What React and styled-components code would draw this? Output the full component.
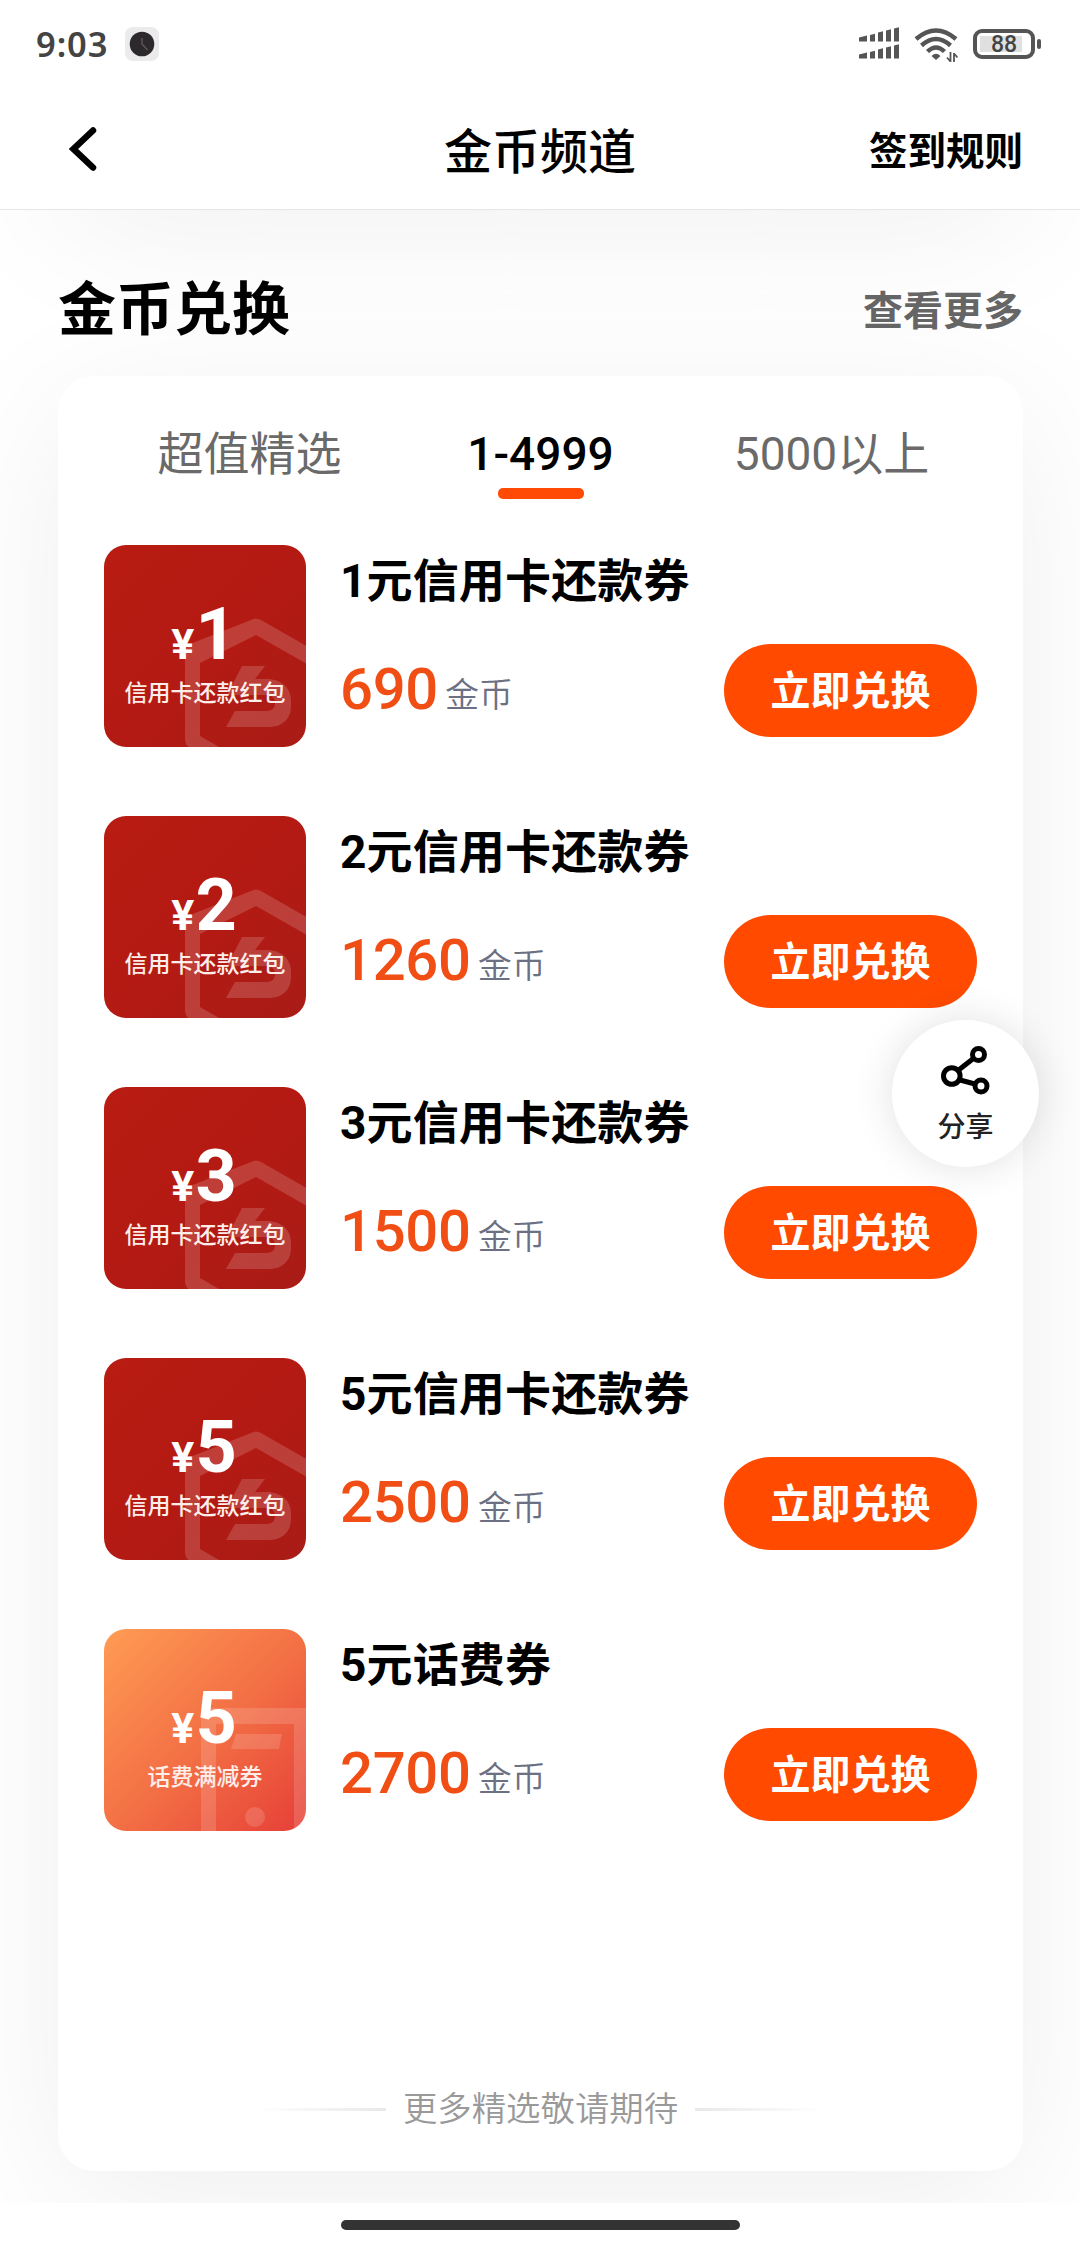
import React from "react";
import styled, { createGlobalStyle } from "styled-components";

const GlobalStyle = createGlobalStyle`
  * {
    box-sizing: border-box;
  }

  body {
    margin: 0;
    background: #fff;
    font-family: Roboto, "Noto Sans CJK SC", sans-serif;
    color: #000;
  }
`;

const Page = styled.div`
  display: flex;
  flex-direction: column;
  width: 1080px;
  height: 2248px;
  overflow: hidden;
  background: #fff;
`;

const StatusBar = styled.div`
  display: flex;
  align-items: center;
  height: 88px;
  padding: 0 38px 0 36px;
`;

const Time = styled.span`
  width: 89px;
  font-family: "Noto Sans", sans-serif;
  font-size: 34.5px;
  font-weight: 600;
  line-height: 44px;
  letter-spacing: 0.9px;
  color: #444;
`;

const StatusIcons = styled.div`
  display: flex;
  align-items: center;
  gap: 14px;
  margin-left: auto;
`;

const NavBar = styled.header`
  display: grid;
  grid-template-columns: 1fr auto 1fr;
  align-items: center;
  height: 122px;
  padding: 6px 57px 0;
  border-bottom: 1px solid #e6e6e6;
`;

const BackButton = styled.button`
  display: flex;
  margin: -6px 0 0 12px;
  padding: 0;
  border: 0;
  background: none;
`;

const NavTitle = styled.h1`
  margin: 0;
  padding-top: 3px;
  font-size: 48px;
  font-weight: 500;
  line-height: 60px;
`;

const NavLink = styled.span`
  justify-self: end;
  font-size: 38.5px;
  font-weight: 700;
  line-height: 60px;
`;

const Content = styled.main`
  display: flex;
  flex-direction: column;
  height: 1993px;
  padding: 0 57px 0 58px;
  overflow: hidden;

  /* tail of the section scrolled away above */
  &::before {
    content: "";
    flex-shrink: 0;
    height: 200px;
    margin-top: -200px;
    box-shadow: 0 15px 150px rgba(0, 0, 0, 0.068);
  }
`;

const SectionHeader = styled.div`
  display: flex;
  align-items: center;
  justify-content: space-between;
  height: 166px;
  padding-top: 34px;
`;

const SectionTitle = styled.h2`
  margin: 0;
  font-size: 58px;
  font-weight: 700;
  line-height: 80px;
`;

const MoreLink = styled.span`
  padding-bottom: 4px;
  font-size: 40px;
  font-weight: 700;
  color: #666;
`;

const Card = styled.section`
  display: flex;
  flex-direction: column;
  height: 1795px;
  padding: 44px 46px 0;
  border-radius: 36px;
  background: #fff;
  box-shadow: 0 30px 150px rgba(0, 0, 0, 0.068);
`;

const Tabs = styled.nav`
  display: grid;
  grid-template-columns: repeat(3, 1fr);
  height: 125px;
`;

const Tab = styled.div`
  display: flex;
  flex-direction: column;
  align-items: center;
  font-size: 46px;
  font-weight: ${(props) => (props.$active ? 500 : 400)};
  line-height: 68px;
  color: ${(props) => (props.$active ? "#000" : "#6a6a6a")};

  &::after {
    content: "";
    display: ${(props) => (props.$active ? "block" : "none")};
    width: 86px;
    height: 11px;
    border-radius: 5px;
    background: #ff4a06;
  }
`;

const CouponList = styled.div`
  display: flex;
  flex-direction: column;
  gap: 69px;
`;

const CouponRow = styled.article`
  display: flex;
  height: 202px;
`;

const Thumb = styled.div`
  position: relative;
  display: flex;
  flex-direction: column;
  align-items: center;
  flex-shrink: 0;
  width: 202px;
  height: 202px;
  padding-top: 48px;
  overflow: hidden;
  border-radius: 22px;
  color: #fff;
  background: ${(props) =>
    props.$kind === "phone"
      ? "linear-gradient(135deg, #ff9c54 0%, #f26d44 55%, #e63f38 100%)"
      : "linear-gradient(135deg, #b81c12 0%, #b31a13 55%, #a91c17 100%)"};
`;

const Watermark = styled.svg`
  position: absolute;
  inset: 0;
`;

const Amount = styled.div`
  position: relative;
  display: flex;
  align-items: baseline;
  gap: 2px;
  padding-right: 3px;
  font-size: 72px;
  font-weight: 700;
  line-height: 84px;
  letter-spacing: -1px;
`;

const Yen = styled.span`
  font-size: 43px;
  line-height: 1;
`;

const ThumbLabel = styled.div`
  position: relative;
  margin-top: 2px;
  font-size: 23px;
  font-weight: 500;
  line-height: 30px;
  color: #fdeeea;
`;

const CouponBody = styled.div`
  flex: 1;
  padding: 0 0 0 34px;
`;

const CouponTitle = styled.h3`
  margin: 0;
  padding-top: 2px;
  font-size: 46px;
  font-weight: 700;
  line-height: 68px;
  letter-spacing: 0.15px;
`;

const CouponFooter = styled.div`
  display: flex;
  align-items: center;
  justify-content: space-between;
  margin-top: 29px;
`;

const Price = styled.div`
  display: flex;
  align-items: baseline;
  padding-bottom: 3px;
  font-size: 58px;
  font-weight: 500;
  line-height: 80px;
  letter-spacing: -0.3px;
  color: #f04e14;
`;

const Unit = styled.span`
  margin: 0 0 0 7px;
  font-size: 34px;
  font-weight: 350;
  line-height: 1;
  letter-spacing: 0;
  color: #6c7083;
  transform: translateY(-2px);
`;

const RedeemButton = styled.button`
  width: 253px;
  height: 93px;
  padding: 0 0 5px;
  border: 0;
  border-radius: 47px;
  background: #ff4a00;
  color: #fff;
  font: inherit;
  font-size: 40px;
  font-weight: 700;
`;

const EndNote = styled.div`
  display: flex;
  align-items: center;
  justify-content: center;
  gap: 17px;
  margin-top: auto;
  padding-bottom: 37px;
  font-size: 34.4px;
  font-weight: 350;
  line-height: 50px;
  color: #999;
`;

const EndLine = styled.span`
  width: 130px;
  height: 3px;
  background: linear-gradient(to ${(props) => props.$to}, #fff, #e8e8e8);
`;

const ShareButton = styled.button`
  position: absolute;
  top: 1020px;
  left: 892px;
  display: flex;
  flex-direction: column;
  align-items: center;
  gap: 14px;
  width: 147px;
  height: 147px;
  padding: 24px 0 0;
  border: 0;
  border-radius: 50%;
  background: #fff;
  box-shadow: 0 0 40px rgba(0, 0, 0, 0.12);
  font: inherit;
  font-size: 28px;
  font-weight: 500;
  line-height: 36px;
  color: #222;
`;

const HomeIndicator = styled.div`
  width: 399px;
  height: 10px;
  margin: 17px auto 0;
  border-radius: 5px;
  background: #333;
`;

const ClockIcon = () => (
  <svg width="34" height="34" viewBox="0 0 34 34">
    <rect width="34" height="34" rx="8" fill="#ebebeb" />
    <circle cx="17" cy="17" r="12.3" fill="#2b292b" />
    <path d="M17 11v6l5.5 6" fill="none" stroke="#6a5657" strokeWidth="1.3" />
  </svg>
);

const SignalIcon = () => (
  <svg width="42" height="36" viewBox="0 0 42 36" fill="#555">
    {[1.5, 18.5].map((y) => (
      <g key={y}>
        <path d={`M1 ${y + 10}l8-2v6h-8z`} />
        <path d={`M12 ${y + 7.5}l5-1.3v7.8h-5z`} />
        <path d={`M20 ${y + 5}l5-1.3v10.3h-5z`} />
        <path d={`M28 ${y + 3}l5-1.3v12.3h-5z`} />
        <path d={`M36 ${y + 1}l5-1.3v14.3h-5z`} />
      </g>
    ))}
  </svg>
);

const WifiIcon = () => (
  <svg width="44" height="36" viewBox="0 0 44 36" fill="none" stroke="#555" strokeWidth="4.4">
    <path d="M2 13Q22-4 42 13" />
    <path d="M7.500 19.500Q22 6.500 36.500 19.500" />
    <path d="M13.500 25.500Q22 17.500 30.500 25.500" />
    <path d="M22 34l-4.500-4q4.500-4.500 9 0z" fill="#555" stroke="none" />
    <path d="M36.500 26v10M36.500 35.500l-3.500-4M40 36v-9M40 27.500l3.500 4" strokeWidth="1.800" />
  </svg>
);

const BatteryIcon = () => (
  <svg width="70" height="34" viewBox="0 0 70 34">
    <rect x="3" y="4" width="58" height="26" rx="7" fill="none" stroke="#555" strokeWidth="4" />
    <rect x="8" y="9" width="42" height="16" fill="#e0e0e0" />
    <rect x="65" y="12" width="4" height="10" rx="2" fill="#555" />
    <text x="32" y="25" textAnchor="middle" fontFamily="Roboto, sans-serif" fontSize="23" fontWeight="500" fill="#444">
      88
    </text>
  </svg>
);

const BackIcon = () => (
  <svg width="28" height="46" viewBox="0 0 28 46">
    <path d="M24 4.500L4.500 23 24 41.500" fill="none" stroke="#000" strokeWidth="6.500" strokeLinecap="round" />
  </svg>
);

const ShareIcon = () => (
  <svg width="50" height="52" viewBox="0 0 50 52" fill="none" stroke="#000" strokeWidth="5">
    <circle cx="10.800" cy="32" r="8.300" />
    <circle cx="37.500" cy="10.500" r="6" />
    <circle cx="40" cy="42" r="6" />
    <path d="M17 26.500L33 14M19 36l15 4" />
  </svg>
);

const CardMark = () => (
  <Watermark viewBox="0 0 202 202" fill="#fff" fillOpacity="0.16">
    <path
      fillRule="evenodd"
      d="M147 75q5-3 10 0l70 40v90l-70 40-71-42q-5-3-5-9v-86q0-6 5-9zM152 90l-56 28v73l56 32 56-32v-69z"
    />
    <path d="M138 121h23l-10 13h12c14 0 24 9 24 21v6c0 12-8 21-22 21h-43l9-16h31c6 0 9-3 9-8s-3-8-9-8h-39z" />
  </Watermark>
);

const PhoneMark = () => (
  <Watermark viewBox="0 0 202 202" fill="#fff" fillOpacity="0.15">
    <path fillRule="evenodd" d="M97 88q0-9 9-9h96v123h-12V95h-78v107H97z" />
    <path d="M132 105h46l-3 15h-48z" />
    <circle cx="151" cy="188" r="10" />
  </Watermark>
);

const coupons = [
  { value: 1, title: "1元信用卡还款券", price: 690, kind: "card" },
  { value: 2, title: "2元信用卡还款券", price: 1260, kind: "card" },
  { value: 3, title: "3元信用卡还款券", price: 1500, kind: "card" },
  { value: 5, title: "5元信用卡还款券", price: 2500, kind: "card" },
  { value: 5, title: "5元话费券", price: 2700, kind: "phone" },
];

const Coupon = ({ value, title, price, kind }) => (
  <CouponRow>
    <Thumb $kind={kind}>
      {kind === "phone" ? <PhoneMark /> : <CardMark />}
      <Amount>
        <Yen>¥</Yen>
        {value}
      </Amount>
      <ThumbLabel>{kind === "phone" ? "话费满减券" : "信用卡还款红包"}</ThumbLabel>
    </Thumb>
    <CouponBody>
      <CouponTitle>{title}</CouponTitle>
      <CouponFooter>
        <Price>
          {price}
          <Unit>金币</Unit>
        </Price>
        <RedeemButton>立即兑换</RedeemButton>
      </CouponFooter>
    </CouponBody>
  </CouponRow>
);

const App = () => (
  <>
    <GlobalStyle />
    <Page>
      <StatusBar>
        <Time>9:03</Time>
        <ClockIcon />
        <StatusIcons>
          <SignalIcon />
          <WifiIcon />
          <BatteryIcon />
        </StatusIcons>
      </StatusBar>
      <NavBar>
        <BackButton aria-label="返回">
          <BackIcon />
        </BackButton>
        <NavTitle>金币频道</NavTitle>
        <NavLink>签到规则</NavLink>
      </NavBar>
      <Content>
        <SectionHeader>
          <SectionTitle>金币兑换</SectionTitle>
          <MoreLink>查看更多</MoreLink>
        </SectionHeader>
        <Card>
          <Tabs>
            <Tab>超值精选</Tab>
            <Tab $active>1-4999</Tab>
            <Tab>5000以上</Tab>
          </Tabs>
          <CouponList>
            {coupons.map((coupon) => (
              <Coupon key={coupon.title} {...coupon} />
            ))}
          </CouponList>
          <EndNote>
            <EndLine $to="right" />
            更多精选敬请期待
            <EndLine $to="left" />
          </EndNote>
        </Card>
      </Content>
      <HomeIndicator />
      <ShareButton>
        <ShareIcon />
        分享
      </ShareButton>
    </Page>
  </>
);

export default App;
